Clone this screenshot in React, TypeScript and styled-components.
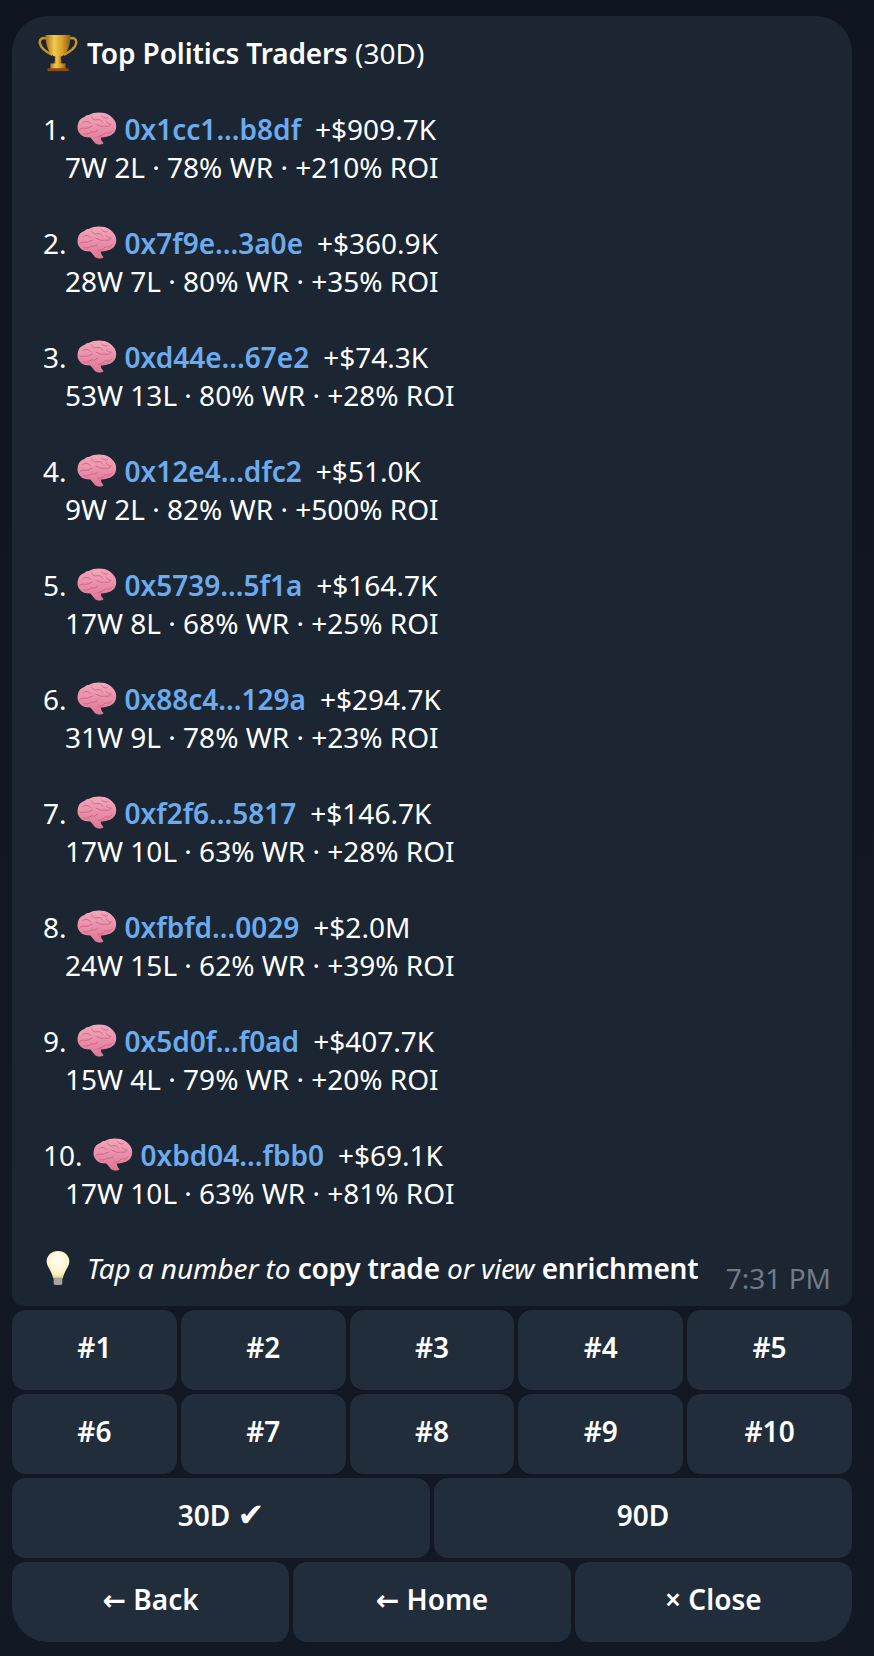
import React from 'react';
import styled, { createGlobalStyle } from 'styled-components';

const GlobalStyle = createGlobalStyle`
  html, body { margin: 0; padding: 0; background: #111722; }
  body { font-family: "Noto Sans", "DejaVu Sans", sans-serif; }
`;

const Page = styled.div`
  width: 874px;
  height: 1656px;
  box-sizing: border-box;
  padding: 16px 22px 14px 12px;
  display: flex;
  flex-direction: column;
  gap: 4px;
  background: linear-gradient(180deg, #0f1520 0%, #121925 100%);
  overflow: hidden;
`;
const Bubble = styled.div`
  background: #1c2633;
  border-radius: 36px 36px 12px 12px;
  padding: 17px 21px 18px 26px;
  color: #fff;
  font-size: 28px;
  line-height: 38px;
  height: 1290px;
  box-sizing: border-box;
`;
const TitleLine = styled.div`
  display: flex;
  align-items: center;
  gap: 9px;
  margin-bottom: 37px;
`;
const TitleText = styled.span`
  font-weight: 600;
  letter-spacing: -0.12px;
`;
const Period = styled.span`
  font-weight: 400;
`;
const Entry = styled.div`
  margin-bottom: 38px;
  padding-left: 5px;
`;
const EntryHead = styled.div`
  display: flex;
  align-items: center;
  white-space: pre;
`;
const Rank = styled.span`
  margin-right: 10px;
`;
const Address = styled.span`
  color: #6cabee;
  font-weight: 600;
  margin: 0 14px 0 8px;
`;
const Stats = styled.div`
  padding-left: 22px;
  white-space: pre;
`;
const Footer = styled.div`
  display: flex;
  align-items: flex-end;
  justify-content: space-between;
  margin-top: -1px;
`;
const Tip = styled.div`
  display: flex;
  align-items: center;
  gap: 16px;
  padding-left: 7px;
  white-space: pre;
  em { font-style: italic; letter-spacing: -0.1px; }
  strong { font-weight: 600; letter-spacing: -0.2px; }
`;
const Time = styled.span`
  color: #6f7b88;
  font-size: 28px;
  line-height: 30px;
  margin-bottom: -6px;
`;
const Keys = styled.div`
  display: flex;
  flex-direction: column;
  gap: 4px;
`;
const KeyRow = styled.div`
  display: flex;
  gap: 4px;
`;
const Key = styled.button<{ $corner?: 'left' | 'right' }>`
  flex: 1 1 0;
  height: 80px;
  border: 0;
  padding: 0 0 6px;
  background: #212d3b;
  color: #fff;
  font-family: inherit;
  font-size: 28px;
  font-weight: 600;
  border-radius: ${(p) =>
    p.$corner === 'left' ? '14px 14px 14px 36px' : p.$corner === 'right' ? '14px 14px 36px 14px' : '14px'};
`;
const CheckMark = styled.span`
  font-size: 32px;
  line-height: 1;
`;
const EmojiSvg = styled.svg`
  display: block;
  flex: none;
`;

const Trophy = () => (
  <EmojiSvg width="40" height="40" viewBox="0 0 42 42">
    <defs>
      <linearGradient id="cup" x1="0" x2="1" y1="0" y2="0">
        <stop offset="0" stopColor="#a9741a" />
        <stop offset="0.35" stopColor="#f3c94f" />
        <stop offset="0.7" stopColor="#d39a28" />
        <stop offset="1" stopColor="#8f5e14" />
      </linearGradient>
    </defs>
    <path d="M10 6C5 4 1 6 2 11c1 5 7 9 13 12" fill="none" stroke="#c8922a" strokeWidth="2.6" />
    <path d="M32 6c5-2 9 0 8 5-1 5-7 9-13 12" fill="none" stroke="#c8922a" strokeWidth="2.6" />
    <path d="M8 2h26c0 11-3 20-10 23h-6C11 22 8 13 8 2z" fill="url(#cup)" />
    <path d="M18 24h6l1 10h-8z" fill="url(#cup)" />
    <rect x="13" y="32" width="16" height="6" fill="url(#cup)" />
    <rect x="10" y="37" width="22" height="3" fill="#8a4a1c" />
  </EmojiSvg>
);

const Brain = () => (
  <EmojiSvg width="40" height="34" viewBox="0 0 42 36">
    <defs>
      <linearGradient id="pink" x1="0" x2="0" y1="0" y2="1">
        <stop offset="0" stopColor="#f4a8bc" />
        <stop offset="1" stopColor="#de7696" />
      </linearGradient>
    </defs>
    <path
      d="M13 3c4-3 11-3 16-2 4 1 7 3 9 6 3 3 4 7 3 11-1 4-4 7-9 8-3 1-5 1-7 1 0 2 1 4 3 6-2 2-6 2-9 0-2-2-3-4-5-6-5 0-9-1-11-4-3-3-3-7-2-11 1-4 4-6 7-7 1-1 3-2 5-2z"
      fill="url(#pink)"
    />
    <g fill="none" stroke="#c65f80" strokeWidth="1" strokeLinecap="round" opacity="0.85">
      <path d="M6 11c3-2 6-1 8 1M3 18c3-2 6 0 8-1 2 0 3-2 5-2" />
      <path d="M15 5c1 3 4 4 7 3 2 0 4 1 5 3M26 4c1 2 4 3 6 2" />
      <path d="M7 23c3 1 6 0 8-2 3 1 5 0 7-2M20 13c3 1 5 3 8 2 3 0 5 1 7-1" />
      <path d="M22 26c3 0 6-2 8-4 3 1 5 0 7-2M31 10c1 2 3 3 5 3" />
    </g>
  </EmojiSvg>
);

const Bulb = () => (
  <EmojiSvg width="26" height="36" viewBox="0 0 26 38">
    <defs>
      <radialGradient id="glass" cx="0.5" cy="0.35" r="0.7">
        <stop offset="0" stopColor="#fffef4" />
        <stop offset="0.7" stopColor="#fdf3c4" />
        <stop offset="1" stopColor="#e2c97c" />
      </radialGradient>
    </defs>
    <path d="M13 1C6 1 1 6 1 12c0 6 5 9 7 18h10c2-9 7-12 7-18 0-6-5-11-12-11z" fill="url(#glass)" />
    <rect x="8.5" y="29" width="9" height="8" rx="2" fill="#a5a5a2" />
  </EmojiSvg>
);

const traders = [
  { addr: '0x1cc1...b8df', pnl: '+$909.7K', stats: '7W 2L · 78% WR · +210% ROI' },
  { addr: '0x7f9e...3a0e', pnl: '+$360.9K', stats: '28W 7L · 80% WR · +35% ROI' },
  { addr: '0xd44e...67e2', pnl: '+$74.3K', stats: '53W 13L · 80% WR · +28% ROI' },
  { addr: '0x12e4...dfc2', pnl: '+$51.0K', stats: '9W 2L · 82% WR · +500% ROI' },
  { addr: '0x5739...5f1a', pnl: '+$164.7K', stats: '17W 8L · 68% WR · +25% ROI' },
  { addr: '0x88c4...129a', pnl: '+$294.7K', stats: '31W 9L · 78% WR · +23% ROI' },
  { addr: '0xf2f6...5817', pnl: '+$146.7K', stats: '17W 10L · 63% WR · +28% ROI' },
  { addr: '0xfbfd...0029', pnl: '+$2.0M', stats: '24W 15L · 62% WR · +39% ROI' },
  { addr: '0x5d0f...f0ad', pnl: '+$407.7K', stats: '15W 4L · 79% WR · +20% ROI' },
  { addr: '0xbd04...fbb0', pnl: '+$69.1K', stats: '17W 10L · 63% WR · +81% ROI' },
];

export default function App() {
  return (
    <Page>
      <GlobalStyle />
      <Bubble>
        <TitleLine>
          <Trophy />
          <span>
            <TitleText>Top Politics Traders</TitleText> <Period>(30D)</Period>
          </span>
        </TitleLine>
        {traders.map((t, i) => (
          <Entry key={t.addr}>
            <EntryHead>
              <Rank>{i + 1}.</Rank>
              <Brain />
              <Address>{t.addr}</Address>
              <span>{t.pnl}</span>
            </EntryHead>
            <Stats>{t.stats}</Stats>
          </Entry>
        ))}
        <Footer>
          <Tip>
            <Bulb />
            <span>
              <em>Tap a number to </em>
              <strong>copy trade</strong>
              <em> or view </em>
              <strong>enrichment</strong>
            </span>
          </Tip>
          <Time>7:31 PM</Time>
        </Footer>
      </Bubble>
      <Keys>
        <KeyRow>
          {[1, 2, 3, 4, 5].map((n) => <Key key={n}>#{n}</Key>)}
        </KeyRow>
        <KeyRow>
          {[6, 7, 8, 9, 10].map((n) => <Key key={n}>#{n}</Key>)}
        </KeyRow>
        <KeyRow>
          <Key>30D <CheckMark>✔</CheckMark></Key>
          <Key>90D</Key>
        </KeyRow>
        <KeyRow>
          <Key $corner="left">← Back</Key>
          <Key>← Home</Key>
          <Key $corner="right">× Close</Key>
        </KeyRow>
      </Keys>
    </Page>
  );
}
